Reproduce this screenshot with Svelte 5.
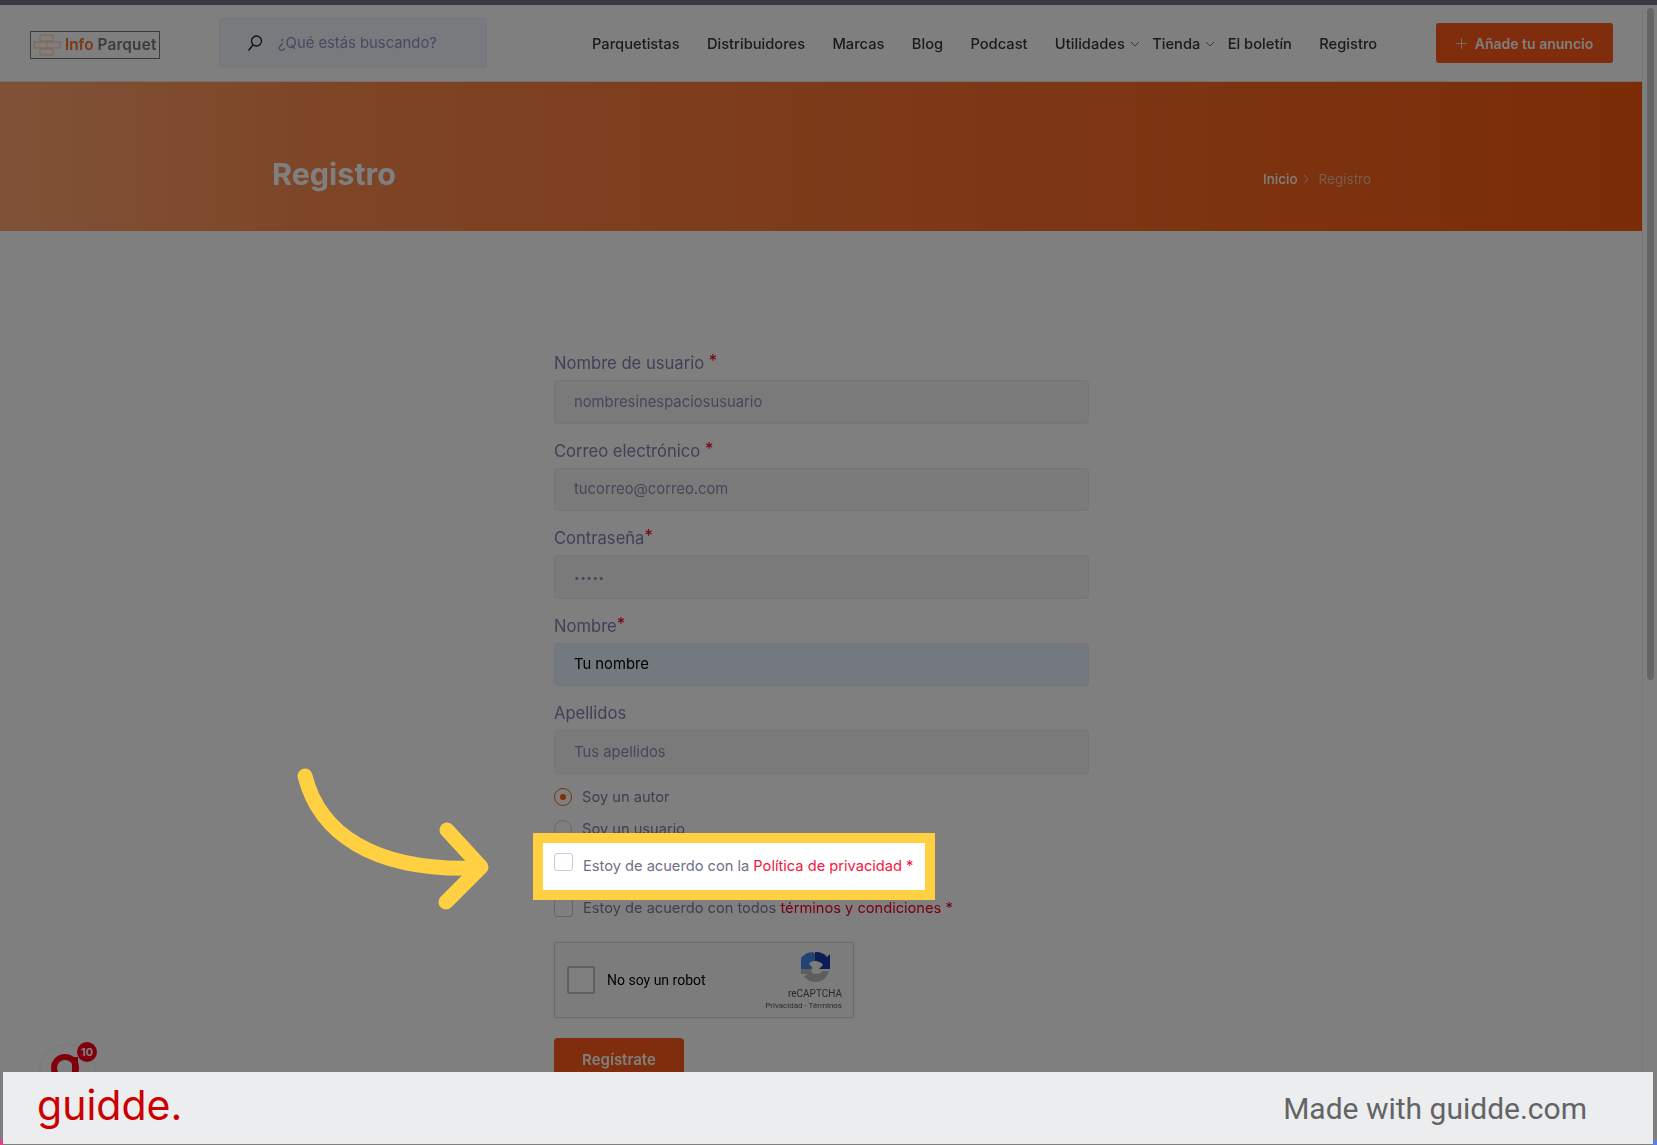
<script>
  const navLinks = [
    { label: 'Parquetistas' },
    { label: 'Distribuidores' },
    { label: 'Marcas' },
    { label: 'Blog' },
    { label: 'Podcast' },
    { label: 'Utilidades', caret: true },
    { label: 'Tienda', caret: true },
    { label: 'El boletín' },
    { label: 'Registro' }
  ]

  const fields = [
    { label: 'Nombre de usuario', req: ' *', value: 'nombresinespaciosusuario' },
    { label: 'Correo electrónico', req: ' *', value: 'tucorreo@correo.com' },
    { label: 'Contraseña', req: '*', value: '•••••', small: true },
    { label: 'Nombre', req: '*', value: 'Tu nombre', filled: true },
    { label: 'Apellidos', req: '', value: 'Tus apellidos' }
  ]
</script>

<div class="shot">
  <div class="page">
    <div class="topbar"></div>
    <div class="body-row">
      <div class="content">
        <header>
          <div class="logo">
            <svg width="28" height="24" viewBox="0 0 28 24" fill="none" stroke="#ffd0b0" stroke-width="1.2">
              <rect x="7" y="2" width="13" height="6" />
              <rect x="1" y="9" width="26" height="6" />
              <rect x="7" y="16" width="13" height="6" />
              <path d="M14 8v8" />
            </svg>
            <span class="info">Info</span>
            <span class="parquet">Parquet</span>
          </div>
          <div class="search">
            <svg width="18" height="18" viewBox="0 0 18 18" fill="none" stroke="#1c1c28" stroke-width="1.3">
              <circle cx="10.500" cy="7" r="5" />
              <path d="M7 11 2.500 16.500" />
            </svg>
            <span>¿Qué estás buscando?</span>
          </div>
          <nav>
            {#each navLinks as link}
              <span class="link" class:has-caret={link.caret}>
                {link.label}
                {#if link.caret}
                  <svg class="caret" width="10" height="6" viewBox="0 0 10 6" fill="none" stroke="#777" stroke-width="1">
                    <path d="M1 1l4 4 4-4" />
                  </svg>
                {/if}
              </span>
            {/each}
          </nav>
          <div class="add-btn">
            <svg width="11" height="11" viewBox="0 0 11 11" stroke="#f2ddd0" stroke-width="1">
              <path d="M5.500 0v11M0 5.500h11" />
            </svg>
            <span>Añade tu anuncio</span>
          </div>
        </header>

        <section class="hero">
          <h1>Registro</h1>
          <div class="crumbs">
            <span>Inicio</span>
            <svg width="6" height="10" viewBox="0 0 6 10" fill="none" stroke="#f0c8b0" stroke-width="1">
              <path d="M1 1l4 4-4 4" />
            </svg>
            <span class="current">Registro</span>
          </div>
        </section>

        <form>
          {#each fields as f}
            <div class="field">
              <div class="label">{f.label}<span class="req">{f.req}</span></div>
              <div class="input" class:filled={f.filled} class:small={f.small}>{f.value}</div>
            </div>
          {/each}

          <div class="choice first">
            <span class="radio on"></span>
            <span>Soy un autor</span>
          </div>
          <div class="choice second">
            <span class="radio"></span>
            <span>Soy un usuario</span>
          </div>
          <div class="choice third">
            <span class="check"></span>
            <span>Estoy de acuerdo con la <span class="red">Política de privacidad *</span></span>
          </div>
          <div class="choice fourth">
            <span class="check"></span>
            <span>Estoy de acuerdo con todos <span class="red">términos y condiciones *</span></span>
          </div>

          <div class="captcha">
            <span class="cap-box"></span>
            <span class="cap-text">No soy un robot</span>
            <div class="cap-brand">
              <svg width="32" height="32" viewBox="0 0 32 32">
                <path d="M1 17V6C4 2 8 0 13 0L15 2V9C12 9 10 10 9 12L12 15V17Z" fill="#4a85e8" />
                <path d="M15 2V0C21 0 25 2 27 5L30 2V17H19L23 13C21 10 18 9 15 9Z" fill="#1c3aa9" />
                <path d="M1 17H11C11 20 13 22 16 22C19 22 21 21 22 19H29C27 26 22 30 16 30C11 30 7 28 4 25L7 22H1Z" fill="#bdbdbd" />
              </svg>
              <div class="cap-name">reCAPTCHA</div>
              <div class="cap-links">Privacidad - Términos</div>
            </div>
          </div>

          <div class="submit">Regístrate</div>
        </form>
      </div>
      <div class="scrollbar"><div class="thumb"></div></div>
    </div>
  </div>

  <div class="chat">
    <svg width="55" height="55" viewBox="0 0 55 55" fill="none" stroke="#ff0018" stroke-width="6">
      <circle cx="25" cy="23" r="11" />
      <path d="M35 12v30" />
    </svg>
    <span class="badge">10</span>
  </div>

  <div class="dim"></div>

  <div class="highlight">
    <span class="check"></span>
    <span class="hl-text">Estoy de acuerdo con la <span class="bright">Política de privacidad *</span></span>
  </div>

  <svg class="arrow" width="220" height="150" viewBox="290 765 220 150" fill="none" stroke="#ffd142" stroke-width="15" stroke-linecap="round" stroke-linejoin="round">
    <path d="M305 776C319 832 372 872 478 868" />
    <path d="M447 830 481 867 446 902" />
  </svg>

  <footer>
    <span class="brand">guidde.</span>
    <span class="made">Made with guidde.com</span>
  </footer>
  <span class="edge-left"></span>
  <span class="edge-right"></span>
</div>

<style>
  :global(body) {
    margin: 0;
    background: #808080;
  }
  .shot {
    position: relative;
    width: 1657px;
    height: 1145px;
    overflow: hidden;
    font-family: Inter, "Liberation Sans", sans-serif;
  }
  .page {
    height: 1145px;
    background: #fff;
    display: flex;
    flex-direction: column;
    filter: blur(0.5px);
  }
  .topbar {
    height: 5px;
    flex: none;
    background: #757585;
  }
  .body-row {
    flex: 1;
    display: flex;
    min-height: 0;
  }
  .content {
    width: 1642px;
    flex: none;
  }
  .scrollbar {
    flex: 1;
    padding: 3px 3px 0 4px;
    border-left: 1px solid #f2f2f2;
  }
  .thumb {
    height: 672px;
    border-radius: 4px;
    background: #cbcbcb;
  }

  header {
    height: 77px;
    display: flex;
    align-items: center;
    box-sizing: border-box;
    padding-left: 30px;
    border-bottom: 1px solid #f0e0d8;
  }
  .logo {
    width: 130px;
    height: 28px;
    margin-top: 3px;
    box-sizing: border-box;
    border: 1px solid #777;
    display: flex;
    align-items: center;
    gap: 4px;
    font-size: 15.300px;
    font-weight: 600;
    padding-left: 2px;
    white-space: nowrap;
  }
  .info { color: #f07020; }
  .parquet {
    color: #777;
    letter-spacing: 0.2px;
  }
  .search {
    margin-left: 59px;
    width: 268px;
    height: 50px;
    box-sizing: border-box;
    display: flex;
    align-items: center;
    gap: 14px;
    padding-left: 26px;
    background: #f3f4fa;
    border: 1px solid #eceef6;
    border-radius: 3px;
    font-size: 14.800px;
    color: #9092c0;
  }
  nav {
    margin-left: 105px;
    padding-top: 2px;
    display: flex;
    align-items: center;
    gap: 27.300px;
    font-size: 14.700px;
    font-weight: 500;
    color: #34343f;
    white-space: nowrap;
    width: 785px;
  }
  .link {
    display: flex;
    align-items: center;
    gap: 5px;
  }
  .has-caret { margin-right: -15px; }
  .add-btn {
    margin-left: 59px;
    width: 177px;
    height: 40px;
    box-sizing: border-box;
    display: flex;
    align-items: center;
    justify-content: center;
    gap: 8px;
    background: #fe5a18;
    border-radius: 3px;
    font-size: 14px;
    font-weight: 600;
    color: #fff;
    white-space: nowrap;
  }

  .hero {
    height: 149px;
    box-sizing: border-box;
    padding: 34px 271px 0 272px;
    display: flex;
    justify-content: space-between;
    align-items: center;
    background: linear-gradient(90deg, #ffa56e 0%, #fd8a4e 20%, #fb6f2c 60%, #f7590f 100%);
  }
  h1 {
    margin: 0;
    font-size: 30.500px;
    font-weight: 700;
    color: #fff;
  }
  .crumbs {
    margin-top: 10px;
    display: flex;
    align-items: center;
    gap: 5px;
    font-size: 13.500px;
    font-weight: 500;
    color: #fff;
  }
  .current {
    margin-left: 5px;
    font-weight: 400;
    color: #f0b89a;
  }

  form {
    padding: 118px 0 0 554px;
    width: 535px;
  }
  .field {
    margin-bottom: 13px;
  }
  .label {
    height: 26px;
    line-height: 24px;
    margin-bottom: 5px;
    font-size: 16.600px;
    color: #8082ae;
  }
  .req {
    color: #f00020;
    vertical-align: 2px;
  }
  .input {
    height: 43.500px;
    box-sizing: border-box;
    padding-left: 19px;
    display: flex;
    align-items: center;
    background: #f5f5f6;
    border: 1px solid #ecedf2;
    border-radius: 3px;
    font-size: 14.800px;
    color: #8c8eb4;
  }
  .small {
    font-size: 10px;
    letter-spacing: 0.5px;
  }
  .filled {
    background: #e8f0fe;
    color: #000;
  }

  .choice {
    display: flex;
    align-items: center;
    gap: 10px;
    height: 20px;
    font-size: 14.650px;
    color: #7e7ea0;
    white-space: nowrap;
  }
  .first { margin-top: 1px; }
  .second { margin-top: 12px; }
  .third { margin-top: 16px; }
  .fourth { margin-top: 23px; }
  .red { color: #f00020; }
  .radio {
    width: 18px;
    height: 18px;
    box-sizing: border-box;
    border: 1px solid #ccd0e0;
    border-radius: 50%;
    display: flex;
    align-items: center;
    justify-content: center;
    flex: none;
  }
  .radio.on { border-color: #fe5a18; }
  .radio.on::after {
    content: '';
    width: 6px;
    height: 6px;
    border-radius: 50%;
    background: #fe5a18;
  }
  .check {
    width: 19px;
    height: 18px;
    box-sizing: border-box;
    flex: none;
    border: 1px solid #c4cbdc;
    border-radius: 3px;
    background: #fff;
  }

  .captcha {
    margin-top: 24px;
    width: 300px;
    height: 76px;
    box-sizing: border-box;
    display: flex;
    align-items: center;
    position: relative;
    background: #f9f9f9;
    border: 1px solid #d6d6d6;
    border-radius: 3px;
    box-shadow: 0 0 3px rgba(0, 0, 0, 0.1);
    font-family: Roboto, sans-serif;
  }
  .cap-box {
    margin-left: 12px;
    width: 28px;
    height: 28px;
    box-sizing: border-box;
    border: 2px solid #c1c1c1;
    border-radius: 2px;
    background: #fff;
  }
  .cap-text {
    margin-left: 12px;
    font-size: 14px;
    color: #000;
  }
  .cap-brand {
    margin-left: auto;
    margin-right: 11px;
    padding-top: 3px;
    display: flex;
    flex-direction: column;
    align-items: flex-end;
    color: #555;
  }
  .cap-brand svg { margin: 0 10px 4px 0; }
  .cap-name {
    font-size: 10px;
    line-height: 12px;
  }
  .cap-links {
    margin-top: 1px;
    font-size: 8px;
    line-height: 10px;
    white-space: nowrap;
  }
  .submit {
    margin-top: 20px;
    width: 130px;
    height: 44px;
    box-sizing: border-box;
    display: flex;
    align-items: center;
    justify-content: center;
    background: #fe5a18;
    border-radius: 4px;
    font-size: 15px;
    font-weight: 600;
    color: #fff;
  }

  .chat {
    position: absolute;
    left: 40px;
    top: 1045px;
    width: 55px;
    height: 55px;
    border-radius: 50%;
    background: #fff;
    box-shadow: 0 0 3px rgba(0, 0, 0, 0.12);
  }
  .chat svg { display: block; }
  .badge {
    position: absolute;
    left: 37px;
    top: -3px;
    width: 20px;
    height: 20px;
    border-radius: 50%;
    background: #ff0018;
    color: #fff;
    font-size: 11px;
    font-weight: 700;
    line-height: 20px;
    text-align: center;
  }

  .dim {
    position: absolute;
    inset: 0;
    background: rgba(0, 0, 0, 0.5);
  }

  .highlight {
    position: absolute;
    left: 533px;
    top: 833px;
    width: 402px;
    height: 67px;
    box-sizing: border-box;
    border: 10px solid #ffd142;
    background: #fff;
    padding: 10px 0 0 11px;
    display: flex;
    align-items: flex-start;
    gap: 10px;
    font-size: 14.650px;
    color: #6e7088;
    white-space: nowrap;
  }
  .hl-text { margin-top: 4px; }
  .bright { color: #f5143c; }

  .arrow {
    position: absolute;
    left: 290px;
    top: 765px;
  }

  footer {
    position: absolute;
    left: 3px;
    top: 1072px;
    width: 1650px;
    height: 72px;
    display: flex;
    align-items: center;
    justify-content: space-between;
    box-sizing: border-box;
    padding: 0 66px 0 34px;
    background: #ecedef;
  }
  .brand {
    font-size: 41px;
    font-weight: 400;
    line-height: 48px;
    color: #cc0000;
    margin-top: -6px;
  }
  .made {
    font-family: Roboto, sans-serif;
    font-size: 30px;
    color: #636466;
  }
  .edge-left {
    position: absolute;
    left: 0;
    top: 1139px;
    width: 3px;
    height: 6px;
    background: #e0408a;
  }
  .edge-right {
    position: absolute;
    left: 1653px;
    top: 1140px;
    width: 4px;
    height: 5px;
    background: #5a80e0;
  }
</style>
